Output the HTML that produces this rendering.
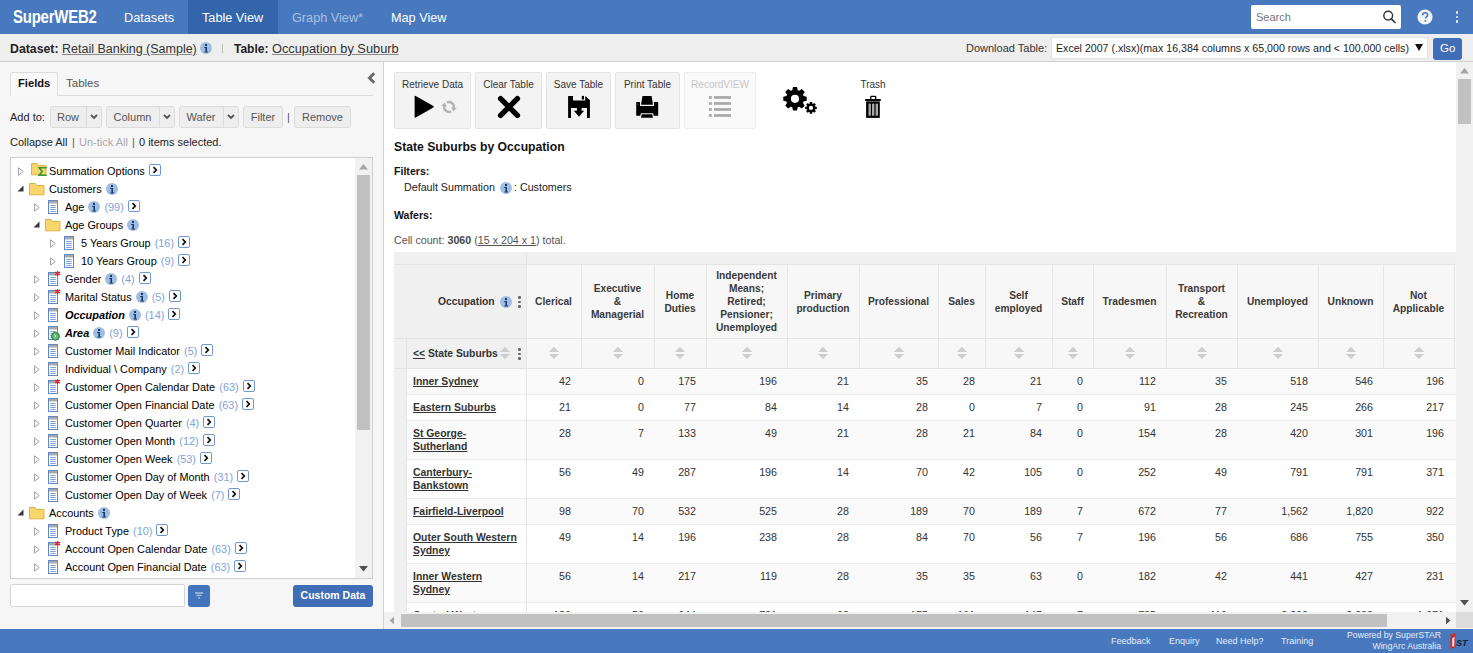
<!DOCTYPE html><html><head><meta charset="utf-8"><style>
*{box-sizing:border-box}
body{margin:0;width:1473px;height:653px;overflow:hidden;position:relative;font-family:'Liberation Sans',sans-serif;color:#222;background:#fff}
.abs{position:absolute}
.t{position:absolute;white-space:nowrap;line-height:1}
u{text-decoration:underline}
</style></head><body>
<div class="abs" style="left:0;top:0;width:1473px;height:34px;background:#4879be"></div>
<div class="abs" style="left:188px;top:0;width:90px;height:34px;background:#3465aa"></div>
<div class="t" style="left:13px;top:8px;font-size:18.5px;font-weight:bold;color:#fff;transform:scaleX(0.81);transform-origin:0 0;letter-spacing:-0.3px">SuperWEB2</div>
<div class="t" style="left:124px;top:12px;font-size:12.7px;color:#fff">Datasets</div>
<div class="t" style="left:202px;top:12px;font-size:12.7px;color:#fff">Table View</div>
<div class="t" style="left:292px;top:12px;font-size:12.7px;color:#a9c1e3">Graph View*</div>
<div class="t" style="left:391px;top:12px;font-size:12.7px;color:#fff">Map View</div>
<div class="abs" style="left:1251px;top:5px;width:150px;height:24px;background:#fff;border-radius:2px"></div>
<div class="t" style="left:1256px;top:12px;font-size:11px;color:#777">Search</div>
<svg class="abs" style="left:1382px;top:10px" width="15" height="14" viewBox="0 0 15 14"><circle cx="6.2" cy="5.6" r="4.4" fill="none" stroke="#333" stroke-width="1.4"/><path d="M9.4 8.9l3.6 3.6" stroke="#333" stroke-width="1.7" stroke-linecap="round"/></svg>
<svg class="abs" style="left:1417px;top:9px" width="16" height="16" viewBox="0 0 16 16"><circle cx="8" cy="8" r="7.6" fill="#eef2f9"/><path d="M5.6 6.2c0-1.5 1.1-2.4 2.5-2.4s2.5.9 2.5 2.2c0 1.9-2.1 1.9-2.1 3.6" fill="none" stroke="#4879be" stroke-width="1.6"/><circle cx="8.4" cy="11.9" r="0.95" fill="#4879be"/></svg>
<div class="abs" style="left:1455.5px;top:10.9px;width:2.8px;height:2.8px;border-radius:50%;background:#eef2f9"></div>
<div class="abs" style="left:1455.5px;top:15.6px;width:2.8px;height:2.8px;border-radius:50%;background:#eef2f9"></div>
<div class="abs" style="left:1455.5px;top:20.3px;width:2.8px;height:2.8px;border-radius:50%;background:#eef2f9"></div>
<div class="abs" style="left:0;top:34px;width:1473px;height:28px;background:#eeeeee;border-bottom:1px solid #cfcfcf"></div>
<div class="t" style="left:10px;top:43px;font-size:12.3px;font-weight:bold;color:#222">Dataset:</div>
<div class="t" style="left:62px;top:43px;font-size:12.5px;color:#333;text-decoration:underline;text-decoration-color:#888">Retail Banking (Sample)</div>
<svg style="position:absolute;left:200px;top:42px" width="12" height="12" viewBox="0 0 12 12"><circle cx="6" cy="6" r="6" fill="#9fbde2"/><rect x="5" y="2" width="2" height="2" fill="#1c3a66"/><path d="M4.2 5h2.8v4.6h1v0.9h-3.6v-0.9h1v-3.7h-1.2z" fill="#1c3a66"/></svg>
<div class="abs" style="left:222px;top:44px;width:1px;height:9px;background:#bbb"></div>
<div class="t" style="left:234px;top:43px;font-size:12px;font-weight:bold;color:#222">Table:</div>
<div class="t" style="left:272px;top:43px;font-size:12.8px;color:#333;text-decoration:underline;text-decoration-color:#888">Occupation by Suburb</div>
<div class="t" style="left:966px;top:43px;font-size:11px;color:#333">Download Table:</div>
<div class="abs" style="left:1051px;top:37px;width:377px;height:22px;background:#fff;border:1px solid #e2e2e2"></div>
<div class="t" style="left:1056px;top:43px;font-size:10.62px;color:#222">Excel 2007 (.xlsx)(max 16,384 columns x 65,000 rows and &lt; 100,000 cells)</div>
<svg class="abs" style="left:1415px;top:44px" width="8" height="7" viewBox="0 0 8 7"><path d="M0 0h8l-4 7z" fill="#111"/></svg>
<div class="abs" style="left:1433px;top:38px;width:29px;height:22px;background:#3f6eb6;border-radius:3px"></div>
<div class="t" style="left:1440px;top:43px;font-size:11.5px;color:#fff">Go</div>
<div class="abs" style="left:0;top:62px;width:384px;height:567px;background:#f6f6f6;border-right:1px solid #d3d3d3"></div>
<div class="abs" style="left:10px;top:72px;width:48px;height:24px;background:#f9f9f9;border:1px solid #dcdcdc;border-bottom:none;border-radius:3px 3px 0 0"></div>
<div class="abs" style="left:58px;top:95px;width:315px;height:1px;background:#dcdcdc"></div>
<div class="t" style="left:18px;top:78px;font-size:11.2px;font-weight:bold;color:#111">Fields</div>
<div class="t" style="left:66px;top:78px;font-size:11.5px;color:#555">Tables</div>
<svg class="abs" style="left:367px;top:72px" width="9" height="12" viewBox="0 0 9 12"><path d="M7.2 1.2L2.4 6 7.2 10.8" fill="none" stroke="#666" stroke-width="2.8"/></svg>
<div class="t" style="left:10px;top:112px;font-size:11px;color:#222">Add to:</div>
<div class="abs" style="left:50px;top:106px;width:52px;height:22px;background:#eeeeee;border:1px solid #dcdcdc;border-radius:3px"></div>
<div class="t" style="left:50px;top:112px;width:36px;text-align:center;font-size:11px;color:#555">Row</div>
<div class="abs" style="left:86px;top:107px;width:1px;height:20px;background:#dcdcdc"></div>
<svg class="abs" style="left:90.0px;top:114px" width="8" height="6" viewBox="0 0 8 6"><path d="M1 1l3 3 3-3" fill="none" stroke="#555" stroke-width="1.8"/></svg>
<div class="abs" style="left:106px;top:106px;width:69px;height:22px;background:#eeeeee;border:1px solid #dcdcdc;border-radius:3px"></div>
<div class="t" style="left:106px;top:112px;width:53px;text-align:center;font-size:11px;color:#555">Column</div>
<div class="abs" style="left:159px;top:107px;width:1px;height:20px;background:#dcdcdc"></div>
<svg class="abs" style="left:163.0px;top:114px" width="8" height="6" viewBox="0 0 8 6"><path d="M1 1l3 3 3-3" fill="none" stroke="#555" stroke-width="1.8"/></svg>
<div class="abs" style="left:179px;top:106px;width:60px;height:22px;background:#eeeeee;border:1px solid #dcdcdc;border-radius:3px"></div>
<div class="t" style="left:179px;top:112px;width:44px;text-align:center;font-size:11px;color:#555">Wafer</div>
<div class="abs" style="left:223px;top:107px;width:1px;height:20px;background:#dcdcdc"></div>
<svg class="abs" style="left:227.0px;top:114px" width="8" height="6" viewBox="0 0 8 6"><path d="M1 1l3 3 3-3" fill="none" stroke="#555" stroke-width="1.8"/></svg>
<div class="abs" style="left:243px;top:106px;width:40px;height:22px;background:#eeeeee;border:1px solid #dcdcdc;border-radius:3px"></div>
<div class="t" style="left:243px;top:112px;width:40px;text-align:center;font-size:11px;color:#555">Filter</div>
<div class="t" style="left:287px;top:112px;font-size:11px;color:#555">|</div>
<div class="abs" style="left:294px;top:106px;width:57px;height:22px;background:#eeeeee;border:1px solid #dcdcdc;border-radius:3px"></div>
<div class="t" style="left:294px;top:112px;width:57px;text-align:center;font-size:11px;color:#555">Remove</div>
<div class="t" style="left:10px;top:137px;font-size:11px;color:#222">Collapse All</div>
<div class="t" style="left:72px;top:137px;font-size:11px;color:#555">|</div>
<div class="t" style="left:79px;top:137px;font-size:11px;color:#aaa">Un-tick All</div>
<div class="t" style="left:132px;top:137px;font-size:11px;color:#555">|</div>
<div class="t" style="left:139px;top:137px;font-size:11px;color:#222">0 items selected.</div>
<div class="abs" style="left:10px;top:157px;width:363px;height:422px;background:#fff;border:1px solid #cfcfcf"></div>
<div class="abs" style="left:355px;top:158px;width:17px;height:420px;background:#f1f1f1"></div>
<div class="abs" style="left:357px;top:175px;width:13px;height:255px;background:#c1c1c1"></div>
<svg class="abs" style="left:359px;top:164px" width="9" height="6" viewBox="0 0 9 6"><path d="M0 5.5L4.5 0 9 5.5z" fill="#a3a3a3"/></svg>
<svg class="abs" style="left:359px;top:566px" width="9" height="6" viewBox="0 0 9 6"><path d="M0 0L4.5 5.5 9 0z" fill="#505050"/></svg>
<div class="abs" style="left:11px;top:158px;width:344px;height:420px;overflow:hidden">
<svg class="abs" style="left:7px;top:9px" width="6" height="9" viewBox="0 0 6 9"><path d="M0.6 0.8L5.2 4.5 0.6 8.2z" fill="#fff" stroke="#a0a0a0" stroke-width="1"/></svg>
<svg class="abs" style="left:20px;top:5px" width="16" height="13" viewBox="0 0 16 13"><path d="M0.5 11.8V0.5h5.8l1.5 2h7.2v9.3z" fill="#f9d56e" stroke="#dcb24a" stroke-width="1"/></svg>
<svg class="abs" style="left:27px;top:9px" width="9" height="9" viewBox="0 0 9 9"><path d="M8 1.5V0.8H1l3.2 3.7L1 8.2h7v-0.8" fill="none" stroke="#2f9a2f" stroke-width="1.6"/></svg>
<div class="t" style="left:38px;top:8px;font-size:10.9px;color:#000;">Summation Options</div>
<svg class="abs" style="left:138px;top:6px" width="12" height="12" viewBox="0 0 12 12"><rect x="0.5" y="0.5" width="11" height="11" rx="1.5" fill="#fff" stroke="#6c98d4"/><path d="M4.5 3.2L7.3 6 4.5 8.8" fill="none" stroke="#111" stroke-width="1.7"/></svg>
<svg class="abs" style="left:6px;top:27px" width="7" height="7" viewBox="0 0 7 7"><path d="M6.5 0.5V6.5H0.5z" fill="#3a3a3a"/></svg>
<svg class="abs" style="left:18px;top:25px" width="16" height="13" viewBox="0 0 16 13"><path d="M0.5 11.8V0.5h5.8l1.5 2h7.2v9.3z" fill="#f9d56e" stroke="#dcb24a" stroke-width="1"/></svg>
<div class="t" style="left:38px;top:26px;font-size:10.9px;color:#000;">Customers</div>
<svg style="position:absolute;left:95px;top:25px" width="12" height="12" viewBox="0 0 12 12"><circle cx="6" cy="6" r="6" fill="#9fbde2"/><rect x="5" y="2" width="2" height="2" fill="#1c3a66"/><path d="M4.2 5h2.8v4.6h1v0.9h-3.6v-0.9h1v-3.7h-1.2z" fill="#1c3a66"/></svg>
<svg class="abs" style="left:23px;top:45px" width="6" height="9" viewBox="0 0 6 9"><path d="M0.6 0.8L5.2 4.5 0.6 8.2z" fill="#fff" stroke="#a0a0a0" stroke-width="1"/></svg>
<svg class="abs" style="left:37px;top:42px;overflow:visible" width="12" height="15" viewBox="0 0 12 15"><rect x="0.5" y="0.5" width="9" height="13" fill="#fff" stroke="#5b87c6"/><rect x="1" y="1" width="8" height="2.5" fill="#a9a9a9"/><path d="M2.2 5.5h5.6M2.2 7.5h5.6M2.2 9.5h5.6M2.2 11.5h5.6" stroke="#7ea3d6" stroke-width="1"/></svg>
<div class="t" style="left:54px;top:44px;font-size:10.9px;color:#000;">Age</div>
<svg style="position:absolute;left:77px;top:43px" width="12" height="12" viewBox="0 0 12 12"><circle cx="6" cy="6" r="6" fill="#9fbde2"/><rect x="5" y="2" width="2" height="2" fill="#1c3a66"/><path d="M4.2 5h2.8v4.6h1v0.9h-3.6v-0.9h1v-3.7h-1.2z" fill="#1c3a66"/></svg>
<div class="t" style="left:93.39518749999999px;top:44px;font-size:10.9px;color:#7fa2d6">(99)</div>
<svg class="abs" style="left:117px;top:42px" width="12" height="12" viewBox="0 0 12 12"><rect x="0.5" y="0.5" width="11" height="11" rx="1.5" fill="#fff" stroke="#6c98d4"/><path d="M4.5 3.2L7.3 6 4.5 8.8" fill="none" stroke="#111" stroke-width="1.7"/></svg>
<svg class="abs" style="left:22px;top:63px" width="7" height="7" viewBox="0 0 7 7"><path d="M6.5 0.5V6.5H0.5z" fill="#3a3a3a"/></svg>
<svg class="abs" style="left:34px;top:61px" width="16" height="13" viewBox="0 0 16 13"><path d="M0.5 11.8V0.5h5.8l1.5 2h7.2v9.3z" fill="#f9d56e" stroke="#dcb24a" stroke-width="1"/></svg>
<div class="t" style="left:54px;top:62px;font-size:10.9px;color:#000;">Age Groups</div>
<svg style="position:absolute;left:116px;top:61px" width="12" height="12" viewBox="0 0 12 12"><circle cx="6" cy="6" r="6" fill="#9fbde2"/><rect x="5" y="2" width="2" height="2" fill="#1c3a66"/><path d="M4.2 5h2.8v4.6h1v0.9h-3.6v-0.9h1v-3.7h-1.2z" fill="#1c3a66"/></svg>
<svg class="abs" style="left:39px;top:81px" width="6" height="9" viewBox="0 0 6 9"><path d="M0.6 0.8L5.2 4.5 0.6 8.2z" fill="#fff" stroke="#a0a0a0" stroke-width="1"/></svg>
<svg class="abs" style="left:53px;top:78px;overflow:visible" width="12" height="15" viewBox="0 0 12 15"><rect x="0.5" y="0.5" width="9" height="13" fill="#fff" stroke="#5b87c6"/><rect x="1" y="1" width="8" height="2.5" fill="#a9a9a9"/><path d="M2.2 5.5h5.6M2.2 7.5h5.6M2.2 9.5h5.6M2.2 11.5h5.6" stroke="#7ea3d6" stroke-width="1"/></svg>
<div class="t" style="left:70px;top:80px;font-size:10.9px;color:#000;">5 Years Group</div>
<div class="t" style="left:143.69187499999998px;top:80px;font-size:10.9px;color:#7fa2d6">(16)</div>
<svg class="abs" style="left:167px;top:78px" width="12" height="12" viewBox="0 0 12 12"><rect x="0.5" y="0.5" width="11" height="11" rx="1.5" fill="#fff" stroke="#6c98d4"/><path d="M4.5 3.2L7.3 6 4.5 8.8" fill="none" stroke="#111" stroke-width="1.7"/></svg>
<svg class="abs" style="left:39px;top:99px" width="6" height="9" viewBox="0 0 6 9"><path d="M0.6 0.8L5.2 4.5 0.6 8.2z" fill="#fff" stroke="#a0a0a0" stroke-width="1"/></svg>
<svg class="abs" style="left:53px;top:96px;overflow:visible" width="12" height="15" viewBox="0 0 12 15"><rect x="0.5" y="0.5" width="9" height="13" fill="#fff" stroke="#5b87c6"/><rect x="1" y="1" width="8" height="2.5" fill="#a9a9a9"/><path d="M2.2 5.5h5.6M2.2 7.5h5.6M2.2 9.5h5.6M2.2 11.5h5.6" stroke="#7ea3d6" stroke-width="1"/></svg>
<div class="t" style="left:70px;top:98px;font-size:10.9px;color:#000;">10 Years Group</div>
<div class="t" style="left:149.7541484375px;top:98px;font-size:10.9px;color:#7fa2d6">(9)</div>
<svg class="abs" style="left:167px;top:96px" width="12" height="12" viewBox="0 0 12 12"><rect x="0.5" y="0.5" width="11" height="11" rx="1.5" fill="#fff" stroke="#6c98d4"/><path d="M4.5 3.2L7.3 6 4.5 8.8" fill="none" stroke="#111" stroke-width="1.7"/></svg>
<svg class="abs" style="left:23px;top:117px" width="6" height="9" viewBox="0 0 6 9"><path d="M0.6 0.8L5.2 4.5 0.6 8.2z" fill="#fff" stroke="#a0a0a0" stroke-width="1"/></svg>
<svg class="abs" style="left:37px;top:114px;overflow:visible" width="12" height="15" viewBox="0 0 12 15"><rect x="0.5" y="0.5" width="9" height="13" fill="#fff" stroke="#5b87c6"/><rect x="1" y="1" width="8" height="2.5" fill="#a9a9a9"/><path d="M2.2 5.5h5.6M2.2 7.5h5.6M2.2 9.5h5.6M2.2 11.5h5.6" stroke="#7ea3d6" stroke-width="1"/><path d="M9.6 -1v5M7.1 0.2l5 2.6M7.1 2.8l5-2.6" stroke="#e8202a" stroke-width="1.3"/></svg>
<div class="t" style="left:54px;top:116px;font-size:10.9px;color:#000;">Gender</div>
<svg style="position:absolute;left:94px;top:115px" width="12" height="12" viewBox="0 0 12 12"><circle cx="6" cy="6" r="6" fill="#9fbde2"/><rect x="5" y="2" width="2" height="2" fill="#1c3a66"/><path d="M4.2 5h2.8v4.6h1v0.9h-3.6v-0.9h1v-3.7h-1.2z" fill="#1c3a66"/></svg>
<div class="t" style="left:110.35746093750001px;top:116px;font-size:10.9px;color:#7fa2d6">(4)</div>
<svg class="abs" style="left:128px;top:114px" width="12" height="12" viewBox="0 0 12 12"><rect x="0.5" y="0.5" width="11" height="11" rx="1.5" fill="#fff" stroke="#6c98d4"/><path d="M4.5 3.2L7.3 6 4.5 8.8" fill="none" stroke="#111" stroke-width="1.7"/></svg>
<svg class="abs" style="left:23px;top:135px" width="6" height="9" viewBox="0 0 6 9"><path d="M0.6 0.8L5.2 4.5 0.6 8.2z" fill="#fff" stroke="#a0a0a0" stroke-width="1"/></svg>
<svg class="abs" style="left:37px;top:132px;overflow:visible" width="12" height="15" viewBox="0 0 12 15"><rect x="0.5" y="0.5" width="9" height="13" fill="#fff" stroke="#5b87c6"/><rect x="1" y="1" width="8" height="2.5" fill="#a9a9a9"/><path d="M2.2 5.5h5.6M2.2 7.5h5.6M2.2 9.5h5.6M2.2 11.5h5.6" stroke="#7ea3d6" stroke-width="1"/><path d="M9.6 -1v5M7.1 0.2l5 2.6M7.1 2.8l5-2.6" stroke="#e8202a" stroke-width="1.3"/></svg>
<div class="t" style="left:54px;top:134px;font-size:10.9px;color:#000;">Marital Status</div>
<svg style="position:absolute;left:125px;top:133px" width="12" height="12" viewBox="0 0 12 12"><circle cx="6" cy="6" r="6" fill="#9fbde2"/><rect x="5" y="2" width="2" height="2" fill="#1c3a66"/><path d="M4.2 5h2.8v4.6h1v0.9h-3.6v-0.9h1v-3.7h-1.2z" fill="#1c3a66"/></svg>
<div class="t" style="left:140.63646875px;top:134px;font-size:10.9px;color:#7fa2d6">(5)</div>
<svg class="abs" style="left:158px;top:132px" width="12" height="12" viewBox="0 0 12 12"><rect x="0.5" y="0.5" width="11" height="11" rx="1.5" fill="#fff" stroke="#6c98d4"/><path d="M4.5 3.2L7.3 6 4.5 8.8" fill="none" stroke="#111" stroke-width="1.7"/></svg>
<svg class="abs" style="left:23px;top:153px" width="6" height="9" viewBox="0 0 6 9"><path d="M0.6 0.8L5.2 4.5 0.6 8.2z" fill="#fff" stroke="#a0a0a0" stroke-width="1"/></svg>
<svg class="abs" style="left:37px;top:150px;overflow:visible" width="12" height="15" viewBox="0 0 12 15"><rect x="0.5" y="0.5" width="9" height="13" fill="#fff" stroke="#5b87c6"/><rect x="1" y="1" width="8" height="2.5" fill="#a9a9a9"/><path d="M2.2 5.5h5.6M2.2 7.5h5.6M2.2 9.5h5.6M2.2 11.5h5.6" stroke="#7ea3d6" stroke-width="1"/></svg>
<div class="t" style="left:54px;top:152px;font-size:10.9px;color:#000;font-weight:bold;font-style:italic;">Occupation</div>
<svg style="position:absolute;left:118px;top:151px" width="12" height="12" viewBox="0 0 12 12"><circle cx="6" cy="6" r="6" fill="#9fbde2"/><rect x="5" y="2" width="2" height="2" fill="#1c3a66"/><path d="M4.2 5h2.8v4.6h1v0.9h-3.6v-0.9h1v-3.7h-1.2z" fill="#1c3a66"/></svg>
<div class="t" style="left:133.9568125px;top:152px;font-size:10.9px;color:#7fa2d6">(14)</div>
<svg class="abs" style="left:157px;top:150px" width="12" height="12" viewBox="0 0 12 12"><rect x="0.5" y="0.5" width="11" height="11" rx="1.5" fill="#fff" stroke="#6c98d4"/><path d="M4.5 3.2L7.3 6 4.5 8.8" fill="none" stroke="#111" stroke-width="1.7"/></svg>
<svg class="abs" style="left:23px;top:171px" width="6" height="9" viewBox="0 0 6 9"><path d="M0.6 0.8L5.2 4.5 0.6 8.2z" fill="#fff" stroke="#a0a0a0" stroke-width="1"/></svg>
<svg class="abs" style="left:37px;top:168px;overflow:visible" width="12" height="15" viewBox="0 0 12 15"><rect x="0.5" y="0.5" width="9" height="13" fill="#fff" stroke="#5b87c6"/><rect x="1" y="1" width="8" height="2.5" fill="#a9a9a9"/><path d="M2.2 5.5h5.6M2.2 7.5h5.6M2.2 9.5h5.6M2.2 11.5h5.6" stroke="#7ea3d6" stroke-width="1"/><circle cx="7.5" cy="10.3" r="3.9" fill="#5cb870" stroke="#1f7a33" stroke-width="1"/><path d="M6 8.6c1.2 0.2 1.8 1 1.6 2.2l-1.2 1" fill="none" stroke="#e8f6ea" stroke-width="1"/></svg>
<div class="t" style="left:54px;top:170px;font-size:10.9px;color:#000;font-weight:bold;font-style:italic;">Area</div>
<svg style="position:absolute;left:82px;top:169px" width="12" height="12" viewBox="0 0 12 12"><circle cx="6" cy="6" r="6" fill="#9fbde2"/><rect x="5" y="2" width="2" height="2" fill="#1c3a66"/><path d="M4.2 5h2.8v4.6h1v0.9h-3.6v-0.9h1v-3.7h-1.2z" fill="#1c3a66"/></svg>
<div class="t" style="left:98.2380234375px;top:170px;font-size:10.9px;color:#7fa2d6">(9)</div>
<svg class="abs" style="left:116px;top:168px" width="12" height="12" viewBox="0 0 12 12"><rect x="0.5" y="0.5" width="11" height="11" rx="1.5" fill="#fff" stroke="#6c98d4"/><path d="M4.5 3.2L7.3 6 4.5 8.8" fill="none" stroke="#111" stroke-width="1.7"/></svg>
<svg class="abs" style="left:23px;top:189px" width="6" height="9" viewBox="0 0 6 9"><path d="M0.6 0.8L5.2 4.5 0.6 8.2z" fill="#fff" stroke="#a0a0a0" stroke-width="1"/></svg>
<svg class="abs" style="left:37px;top:186px;overflow:visible" width="12" height="15" viewBox="0 0 12 15"><rect x="0.5" y="0.5" width="9" height="13" fill="#fff" stroke="#5b87c6"/><rect x="1" y="1" width="8" height="2.5" fill="#a9a9a9"/><path d="M2.2 5.5h5.6M2.2 7.5h5.6M2.2 9.5h5.6M2.2 11.5h5.6" stroke="#7ea3d6" stroke-width="1"/></svg>
<div class="t" style="left:54px;top:188px;font-size:10.9px;color:#000;">Customer Mail Indicator</div>
<div class="t" style="left:173.09718750000002px;top:188px;font-size:10.9px;color:#7fa2d6">(5)</div>
<svg class="abs" style="left:190px;top:186px" width="12" height="12" viewBox="0 0 12 12"><rect x="0.5" y="0.5" width="11" height="11" rx="1.5" fill="#fff" stroke="#6c98d4"/><path d="M4.5 3.2L7.3 6 4.5 8.8" fill="none" stroke="#111" stroke-width="1.7"/></svg>
<svg class="abs" style="left:23px;top:207px" width="6" height="9" viewBox="0 0 6 9"><path d="M0.6 0.8L5.2 4.5 0.6 8.2z" fill="#fff" stroke="#a0a0a0" stroke-width="1"/></svg>
<svg class="abs" style="left:37px;top:204px;overflow:visible" width="12" height="15" viewBox="0 0 12 15"><rect x="0.5" y="0.5" width="9" height="13" fill="#fff" stroke="#5b87c6"/><rect x="1" y="1" width="8" height="2.5" fill="#a9a9a9"/><path d="M2.2 5.5h5.6M2.2 7.5h5.6M2.2 9.5h5.6M2.2 11.5h5.6" stroke="#7ea3d6" stroke-width="1"/></svg>
<div class="t" style="left:54px;top:206px;font-size:10.9px;color:#000;">Individual \ Company</div>
<div class="t" style="left:159.790671875px;top:206px;font-size:10.9px;color:#7fa2d6">(2)</div>
<svg class="abs" style="left:177px;top:204px" width="12" height="12" viewBox="0 0 12 12"><rect x="0.5" y="0.5" width="11" height="11" rx="1.5" fill="#fff" stroke="#6c98d4"/><path d="M4.5 3.2L7.3 6 4.5 8.8" fill="none" stroke="#111" stroke-width="1.7"/></svg>
<svg class="abs" style="left:23px;top:225px" width="6" height="9" viewBox="0 0 6 9"><path d="M0.6 0.8L5.2 4.5 0.6 8.2z" fill="#fff" stroke="#a0a0a0" stroke-width="1"/></svg>
<svg class="abs" style="left:37px;top:222px;overflow:visible" width="12" height="15" viewBox="0 0 12 15"><rect x="0.5" y="0.5" width="9" height="13" fill="#fff" stroke="#5b87c6"/><rect x="1" y="1" width="8" height="2.5" fill="#a9a9a9"/><path d="M2.2 5.5h5.6M2.2 7.5h5.6M2.2 9.5h5.6M2.2 11.5h5.6" stroke="#7ea3d6" stroke-width="1"/><path d="M9.6 -1v5M7.1 0.2l5 2.6M7.1 2.8l5-2.6" stroke="#e8202a" stroke-width="1.3"/></svg>
<div class="t" style="left:54px;top:224px;font-size:10.9px;color:#000;">Customer Open Calendar Date</div>
<div class="t" style="left:208.2565px;top:224px;font-size:10.9px;color:#7fa2d6">(63)</div>
<svg class="abs" style="left:232px;top:222px" width="12" height="12" viewBox="0 0 12 12"><rect x="0.5" y="0.5" width="11" height="11" rx="1.5" fill="#fff" stroke="#6c98d4"/><path d="M4.5 3.2L7.3 6 4.5 8.8" fill="none" stroke="#111" stroke-width="1.7"/></svg>
<svg class="abs" style="left:23px;top:243px" width="6" height="9" viewBox="0 0 6 9"><path d="M0.6 0.8L5.2 4.5 0.6 8.2z" fill="#fff" stroke="#a0a0a0" stroke-width="1"/></svg>
<svg class="abs" style="left:37px;top:240px;overflow:visible" width="12" height="15" viewBox="0 0 12 15"><rect x="0.5" y="0.5" width="9" height="13" fill="#fff" stroke="#5b87c6"/><rect x="1" y="1" width="8" height="2.5" fill="#a9a9a9"/><path d="M2.2 5.5h5.6M2.2 7.5h5.6M2.2 9.5h5.6M2.2 11.5h5.6" stroke="#7ea3d6" stroke-width="1"/></svg>
<div class="t" style="left:54px;top:242px;font-size:10.9px;color:#000;">Customer Open Financial Date</div>
<div class="t" style="left:207.6442265625px;top:242px;font-size:10.9px;color:#7fa2d6">(63)</div>
<svg class="abs" style="left:231px;top:240px" width="12" height="12" viewBox="0 0 12 12"><rect x="0.5" y="0.5" width="11" height="11" rx="1.5" fill="#fff" stroke="#6c98d4"/><path d="M4.5 3.2L7.3 6 4.5 8.8" fill="none" stroke="#111" stroke-width="1.7"/></svg>
<svg class="abs" style="left:23px;top:261px" width="6" height="9" viewBox="0 0 6 9"><path d="M0.6 0.8L5.2 4.5 0.6 8.2z" fill="#fff" stroke="#a0a0a0" stroke-width="1"/></svg>
<svg class="abs" style="left:37px;top:258px;overflow:visible" width="12" height="15" viewBox="0 0 12 15"><rect x="0.5" y="0.5" width="9" height="13" fill="#fff" stroke="#5b87c6"/><rect x="1" y="1" width="8" height="2.5" fill="#a9a9a9"/><path d="M2.2 5.5h5.6M2.2 7.5h5.6M2.2 9.5h5.6M2.2 11.5h5.6" stroke="#7ea3d6" stroke-width="1"/></svg>
<div class="t" style="left:54px;top:260px;font-size:10.9px;color:#000;">Customer Open Quarter</div>
<div class="t" style="left:174.92208593750001px;top:260px;font-size:10.9px;color:#7fa2d6">(4)</div>
<svg class="abs" style="left:192px;top:258px" width="12" height="12" viewBox="0 0 12 12"><rect x="0.5" y="0.5" width="11" height="11" rx="1.5" fill="#fff" stroke="#6c98d4"/><path d="M4.5 3.2L7.3 6 4.5 8.8" fill="none" stroke="#111" stroke-width="1.7"/></svg>
<svg class="abs" style="left:23px;top:279px" width="6" height="9" viewBox="0 0 6 9"><path d="M0.6 0.8L5.2 4.5 0.6 8.2z" fill="#fff" stroke="#a0a0a0" stroke-width="1"/></svg>
<svg class="abs" style="left:37px;top:276px;overflow:visible" width="12" height="15" viewBox="0 0 12 15"><rect x="0.5" y="0.5" width="9" height="13" fill="#fff" stroke="#5b87c6"/><rect x="1" y="1" width="8" height="2.5" fill="#a9a9a9"/><path d="M2.2 5.5h5.6M2.2 7.5h5.6M2.2 9.5h5.6M2.2 11.5h5.6" stroke="#7ea3d6" stroke-width="1"/></svg>
<div class="t" style="left:54px;top:278px;font-size:10.9px;color:#000;">Customer Open Month</div>
<div class="t" style="left:168.26371875px;top:278px;font-size:10.9px;color:#7fa2d6">(12)</div>
<svg class="abs" style="left:192px;top:276px" width="12" height="12" viewBox="0 0 12 12"><rect x="0.5" y="0.5" width="11" height="11" rx="1.5" fill="#fff" stroke="#6c98d4"/><path d="M4.5 3.2L7.3 6 4.5 8.8" fill="none" stroke="#111" stroke-width="1.7"/></svg>
<svg class="abs" style="left:23px;top:297px" width="6" height="9" viewBox="0 0 6 9"><path d="M0.6 0.8L5.2 4.5 0.6 8.2z" fill="#fff" stroke="#a0a0a0" stroke-width="1"/></svg>
<svg class="abs" style="left:37px;top:294px;overflow:visible" width="12" height="15" viewBox="0 0 12 15"><rect x="0.5" y="0.5" width="9" height="13" fill="#fff" stroke="#5b87c6"/><rect x="1" y="1" width="8" height="2.5" fill="#a9a9a9"/><path d="M2.2 5.5h5.6M2.2 7.5h5.6M2.2 9.5h5.6M2.2 11.5h5.6" stroke="#7ea3d6" stroke-width="1"/></svg>
<div class="t" style="left:54px;top:296px;font-size:10.9px;color:#000;">Customer Open Week</div>
<div class="t" style="left:165.63409375px;top:296px;font-size:10.9px;color:#7fa2d6">(53)</div>
<svg class="abs" style="left:189px;top:294px" width="12" height="12" viewBox="0 0 12 12"><rect x="0.5" y="0.5" width="11" height="11" rx="1.5" fill="#fff" stroke="#6c98d4"/><path d="M4.5 3.2L7.3 6 4.5 8.8" fill="none" stroke="#111" stroke-width="1.7"/></svg>
<svg class="abs" style="left:23px;top:315px" width="6" height="9" viewBox="0 0 6 9"><path d="M0.6 0.8L5.2 4.5 0.6 8.2z" fill="#fff" stroke="#a0a0a0" stroke-width="1"/></svg>
<svg class="abs" style="left:37px;top:312px;overflow:visible" width="12" height="15" viewBox="0 0 12 15"><rect x="0.5" y="0.5" width="9" height="13" fill="#fff" stroke="#5b87c6"/><rect x="1" y="1" width="8" height="2.5" fill="#a9a9a9"/><path d="M2.2 5.5h5.6M2.2 7.5h5.6M2.2 9.5h5.6M2.2 11.5h5.6" stroke="#7ea3d6" stroke-width="1"/></svg>
<div class="t" style="left:54px;top:314px;font-size:10.9px;color:#000;">Customer Open Day of Month</div>
<div class="t" style="left:202.79457812500002px;top:314px;font-size:10.9px;color:#7fa2d6">(31)</div>
<svg class="abs" style="left:226px;top:312px" width="12" height="12" viewBox="0 0 12 12"><rect x="0.5" y="0.5" width="11" height="11" rx="1.5" fill="#fff" stroke="#6c98d4"/><path d="M4.5 3.2L7.3 6 4.5 8.8" fill="none" stroke="#111" stroke-width="1.7"/></svg>
<svg class="abs" style="left:23px;top:333px" width="6" height="9" viewBox="0 0 6 9"><path d="M0.6 0.8L5.2 4.5 0.6 8.2z" fill="#fff" stroke="#a0a0a0" stroke-width="1"/></svg>
<svg class="abs" style="left:37px;top:330px;overflow:visible" width="12" height="15" viewBox="0 0 12 15"><rect x="0.5" y="0.5" width="9" height="13" fill="#fff" stroke="#5b87c6"/><rect x="1" y="1" width="8" height="2.5" fill="#a9a9a9"/><path d="M2.2 5.5h5.6M2.2 7.5h5.6M2.2 9.5h5.6M2.2 11.5h5.6" stroke="#7ea3d6" stroke-width="1"/></svg>
<div class="t" style="left:54px;top:332px;font-size:10.9px;color:#000;">Customer Open Day of Week</div>
<div class="t" style="left:200.164953125px;top:332px;font-size:10.9px;color:#7fa2d6">(7)</div>
<svg class="abs" style="left:217px;top:330px" width="12" height="12" viewBox="0 0 12 12"><rect x="0.5" y="0.5" width="11" height="11" rx="1.5" fill="#fff" stroke="#6c98d4"/><path d="M4.5 3.2L7.3 6 4.5 8.8" fill="none" stroke="#111" stroke-width="1.7"/></svg>
<svg class="abs" style="left:6px;top:351px" width="7" height="7" viewBox="0 0 7 7"><path d="M6.5 0.5V6.5H0.5z" fill="#3a3a3a"/></svg>
<svg class="abs" style="left:18px;top:349px" width="16" height="13" viewBox="0 0 16 13"><path d="M0.5 11.8V0.5h5.8l1.5 2h7.2v9.3z" fill="#f9d56e" stroke="#dcb24a" stroke-width="1"/></svg>
<div class="t" style="left:38px;top:350px;font-size:10.9px;color:#000;">Accounts</div>
<svg style="position:absolute;left:87px;top:349px" width="12" height="12" viewBox="0 0 12 12"><circle cx="6" cy="6" r="6" fill="#9fbde2"/><rect x="5" y="2" width="2" height="2" fill="#1c3a66"/><path d="M4.2 5h2.8v4.6h1v0.9h-3.6v-0.9h1v-3.7h-1.2z" fill="#1c3a66"/></svg>
<svg class="abs" style="left:23px;top:369px" width="6" height="9" viewBox="0 0 6 9"><path d="M0.6 0.8L5.2 4.5 0.6 8.2z" fill="#fff" stroke="#a0a0a0" stroke-width="1"/></svg>
<svg class="abs" style="left:37px;top:366px;overflow:visible" width="12" height="15" viewBox="0 0 12 15"><rect x="0.5" y="0.5" width="9" height="13" fill="#fff" stroke="#5b87c6"/><rect x="1" y="1" width="8" height="2.5" fill="#a9a9a9"/><path d="M2.2 5.5h5.6M2.2 7.5h5.6M2.2 9.5h5.6M2.2 11.5h5.6" stroke="#7ea3d6" stroke-width="1"/></svg>
<div class="t" style="left:54px;top:368px;font-size:10.9px;color:#000;">Product Type</div>
<div class="t" style="left:122.028984375px;top:368px;font-size:10.9px;color:#7fa2d6">(10)</div>
<svg class="abs" style="left:145px;top:366px" width="12" height="12" viewBox="0 0 12 12"><rect x="0.5" y="0.5" width="11" height="11" rx="1.5" fill="#fff" stroke="#6c98d4"/><path d="M4.5 3.2L7.3 6 4.5 8.8" fill="none" stroke="#111" stroke-width="1.7"/></svg>
<svg class="abs" style="left:23px;top:387px" width="6" height="9" viewBox="0 0 6 9"><path d="M0.6 0.8L5.2 4.5 0.6 8.2z" fill="#fff" stroke="#a0a0a0" stroke-width="1"/></svg>
<svg class="abs" style="left:37px;top:384px;overflow:visible" width="12" height="15" viewBox="0 0 12 15"><rect x="0.5" y="0.5" width="9" height="13" fill="#fff" stroke="#5b87c6"/><rect x="1" y="1" width="8" height="2.5" fill="#a9a9a9"/><path d="M2.2 5.5h5.6M2.2 7.5h5.6M2.2 9.5h5.6M2.2 11.5h5.6" stroke="#7ea3d6" stroke-width="1"/><path d="M9.6 -1v5M7.1 0.2l5 2.6M7.1 2.8l5-2.6" stroke="#e8202a" stroke-width="1.3"/></svg>
<div class="t" style="left:54px;top:386px;font-size:10.9px;color:#000;">Account Open Calendar Date</div>
<div class="t" style="left:200.394875px;top:386px;font-size:10.9px;color:#7fa2d6">(63)</div>
<svg class="abs" style="left:224px;top:384px" width="12" height="12" viewBox="0 0 12 12"><rect x="0.5" y="0.5" width="11" height="11" rx="1.5" fill="#fff" stroke="#6c98d4"/><path d="M4.5 3.2L7.3 6 4.5 8.8" fill="none" stroke="#111" stroke-width="1.7"/></svg>
<svg class="abs" style="left:23px;top:405px" width="6" height="9" viewBox="0 0 6 9"><path d="M0.6 0.8L5.2 4.5 0.6 8.2z" fill="#fff" stroke="#a0a0a0" stroke-width="1"/></svg>
<svg class="abs" style="left:37px;top:402px;overflow:visible" width="12" height="15" viewBox="0 0 12 15"><rect x="0.5" y="0.5" width="9" height="13" fill="#fff" stroke="#5b87c6"/><rect x="1" y="1" width="8" height="2.5" fill="#a9a9a9"/><path d="M2.2 5.5h5.6M2.2 7.5h5.6M2.2 9.5h5.6M2.2 11.5h5.6" stroke="#7ea3d6" stroke-width="1"/></svg>
<div class="t" style="left:54px;top:404px;font-size:10.9px;color:#000;">Account Open Financial Date</div>
<div class="t" style="left:199.7826015625px;top:404px;font-size:10.9px;color:#7fa2d6">(63)</div>
<svg class="abs" style="left:223px;top:402px" width="12" height="12" viewBox="0 0 12 12"><rect x="0.5" y="0.5" width="11" height="11" rx="1.5" fill="#fff" stroke="#6c98d4"/><path d="M4.5 3.2L7.3 6 4.5 8.8" fill="none" stroke="#111" stroke-width="1.7"/></svg>
</div>
<div class="abs" style="left:10px;top:584px;width:175px;height:23px;background:#fff;border:1px solid #d5d5d5;border-radius:2px"></div>
<div class="abs" style="left:188px;top:585px;width:22px;height:22px;background:#4275bd;border-radius:3px"></div>
<svg class="abs" style="left:194px;top:592px" width="10" height="8" viewBox="0 0 10 8"><path d="M1 1h8M2.5 3.4h5M4 5.8h2" stroke="#a9c1e4" stroke-width="1.3"/></svg>
<div class="abs" style="left:293px;top:585px;width:80px;height:22px;background:#3f6eb6;border-radius:3px"></div>
<div class="t" style="left:293px;top:590px;width:80px;text-align:center;font-size:10.5px;font-weight:bold;color:#fff">Custom Data</div>
<div class="abs" style="left:394px;top:72px;width:77px;height:57px;background:#f3f3f3;border:1px solid #e4e4e4;border-radius:2px"></div>
<div class="t" style="left:394px;top:80px;width:77px;text-align:center;font-size:10px;color:#333">Retrieve Data</div>
<div class="abs" style="left:475px;top:72px;width:67px;height:57px;background:#f3f3f3;border:1px solid #e4e4e4;border-radius:2px"></div>
<div class="t" style="left:475px;top:80px;width:67px;text-align:center;font-size:10px;color:#333">Clear Table</div>
<div class="abs" style="left:546px;top:72px;width:65px;height:57px;background:#f3f3f3;border:1px solid #e4e4e4;border-radius:2px"></div>
<div class="t" style="left:546px;top:80px;width:65px;text-align:center;font-size:10px;color:#333">Save Table</div>
<div class="abs" style="left:615px;top:72px;width:65px;height:57px;background:#f3f3f3;border:1px solid #e4e4e4;border-radius:2px"></div>
<div class="t" style="left:615px;top:80px;width:65px;text-align:center;font-size:10px;color:#333">Print Table</div>
<div class="abs" style="left:684px;top:72px;width:72px;height:57px;background:#fafafa;border:1px solid #ededed;border-radius:2px"></div>
<div class="t" style="left:684px;top:80px;width:72px;text-align:center;font-size:10px;color:#c6c6c6">RecordVIEW</div>
<div class="t" style="left:851px;top:80px;width:44px;text-align:center;font-size:10px;color:#333">Trash</div>
<svg class="abs" style="left:413px;top:95px" width="22" height="24" viewBox="0 0 22 24"><path d="M1.6 1.6Q1.6 0.4 2.7 1L20.4 11.1Q21.3 11.8 20.4 12.5L2.7 22.6Q1.6 23.2 1.6 22z" fill="#000"/></svg>
<svg class="abs" style="left:441px;top:99px" width="16" height="16" viewBox="0 0 16 16"><path d="M5.93 3.56A4.9 4.9 0 0 1 12.73 9.27" fill="none" stroke="#b3b3b3" stroke-width="2.3"/><path d="M10.07 12.44A4.9 4.9 0 0 1 3.27 6.73" fill="none" stroke="#b3b3b3" stroke-width="2.3"/><path d="M10.2 8.2L15.8 9.2 12.2 12.6z" fill="#b3b3b3"/><path d="M5.8 7.8L0.2 6.8 3.8 3.4z" fill="#b3b3b3"/></svg>
<svg class="abs" style="left:497px;top:95px" width="24" height="24" viewBox="0 0 24 24"><path d="M3.6 3.6L20.4 20.4M20.4 3.6L3.6 20.4" stroke="#000" stroke-width="5.4" stroke-linecap="round"/></svg>
<svg class="abs" style="left:566px;top:95px" width="26" height="24" viewBox="0 0 26 24"><path d="M2.1 1.3Q2.1 0.9 2.6 0.9H7V5.5H19.2V0.9L23.9 5V22.4Q23.9 22.9 23.4 22.9H21V13.1H5V22.9H2.6Q2.1 22.9 2.1 22.4z" fill="#000"/><rect x="15.8" y="0.9" width="2.2" height="3.6" fill="#000"/><rect x="10.9" y="12" width="4.7" height="4.5" fill="#000"/><path d="M7.9 15.8H18.1L13 21.8z" fill="#000"/></svg>
<svg class="abs" style="left:634px;top:95px" width="26" height="24" viewBox="0 0 26 24"><path d="M8.5 1.1H17.6L19 9.7H7z" fill="#000"/><path d="M2.2 7.4Q2.2 7 2.6 7H6V10.9H20V7H23.8Q24.2 7 24.2 7.4V20.3Q24.2 20.7 23.8 20.7H19.6L19.2 18.3H6.8L6.4 20.7H2.6Q2.2 20.7 2.2 20.3z" fill="#000"/><path d="M7.8 19.2H18.2L19 22.8H7z" fill="#000"/><rect x="3.2" y="8.6" width="1.2" height="1" fill="#555"/></svg>
<svg class="abs" style="left:708px;top:95px" width="24" height="24" viewBox="0 0 24 24"><g fill="#a9a9a9"><rect x="0.9" y="1.1" width="2.9" height="2.7"/><rect x="6" y="1.1" width="17" height="2.7"/><rect x="0.9" y="7.1" width="2.9" height="2.7"/><rect x="6" y="7.1" width="17" height="2.7"/><rect x="0.9" y="13.1" width="2.9" height="2.7"/><rect x="6" y="13.1" width="17" height="2.7"/><rect x="0.9" y="19.1" width="2.9" height="2.7"/><rect x="6" y="19.1" width="17" height="2.7"/></g></svg>
<svg class="abs" style="left:780px;top:84px" width="40" height="34" viewBox="0 0 40 34"><path d="M23.57 12.04 L26.73 12.81 L26.73 16.79 L23.57 17.56 L23.01 18.91 L24.70 21.69 L21.89 24.50 L19.11 22.81 L17.76 23.37 L16.99 26.53 L13.01 26.53 L12.24 23.37 L10.89 22.81 L8.11 24.50 L5.30 21.69 L6.99 18.91 L6.43 17.56 L3.27 16.79 L3.27 12.81 L6.43 12.04 L6.99 10.69 L5.30 7.91 L8.11 5.10 L10.89 6.79 L12.24 6.23 L13.01 3.07 L16.99 3.07 L17.76 6.23 L19.11 6.79 L21.89 5.10 L24.70 7.91 L23.01 10.69z M19.10 14.80A4.1 4.1 0 1 0 10.90 14.80A4.1 4.1 0 1 0 19.10 14.80z" fill="#000" fill-rule="evenodd"/><path d="M35.07 22.52 L36.80 22.81 L36.80 24.99 L35.07 25.28 L34.85 25.81 L35.87 27.23 L34.33 28.77 L32.91 27.75 L32.38 27.97 L32.09 29.70 L29.91 29.70 L29.62 27.97 L29.09 27.75 L27.67 28.77 L26.13 27.23 L27.15 25.81 L26.93 25.28 L25.20 24.99 L25.20 22.81 L26.93 22.52 L27.15 21.99 L26.13 20.57 L27.67 19.03 L29.09 20.05 L29.62 19.83 L29.91 18.10 L32.09 18.10 L32.38 19.83 L32.91 20.05 L34.33 19.03 L35.87 20.57 L34.85 21.99z M33.10 23.90A2.1 2.1 0 1 0 28.90 23.90A2.1 2.1 0 1 0 33.10 23.90z" fill="#000" fill-rule="evenodd"/></svg>
<svg class="abs" style="left:864px;top:95px" width="18" height="24" viewBox="0 0 18 24"><path d="M6.8 4V1.8Q6.8 1.3 7.3 1.3H11.2Q11.7 1.3 11.7 1.8V4" fill="none" stroke="#000" stroke-width="1.3"/><rect x="1.1" y="4" width="15.7" height="1.9" rx="0.5" fill="#000"/><rect x="2.1" y="5.9" width="13.7" height="1.2" fill="#555"/><rect x="2.1" y="7" width="13.7" height="15.9" fill="#000"/><g fill="#a8a8a8"><rect x="4.5" y="8.7" width="2.4" height="12"/><rect x="8" y="8.7" width="2.4" height="12"/><rect x="11.6" y="8.7" width="2.4" height="12"/></g></svg>
<div class="t" style="left:394px;top:141px;font-size:12.2px;font-weight:bold;color:#111">State Suburbs by Occupation</div>
<div class="t" style="left:394px;top:166px;font-size:10.6px;font-weight:bold;color:#111">Filters:</div>
<div class="t" style="left:404px;top:182px;font-size:10.7px;color:#222">Default Summation</div>
<svg style="position:absolute;left:500px;top:182px" width="12" height="12" viewBox="0 0 12 12"><circle cx="6" cy="6" r="6" fill="#9fbde2"/><rect x="5" y="2" width="2" height="2" fill="#1c3a66"/><path d="M4.2 5h2.8v4.6h1v0.9h-3.6v-0.9h1v-3.7h-1.2z" fill="#1c3a66"/></svg>
<div class="t" style="left:514px;top:182px;font-size:10.7px;color:#222">: Customers</div>
<div class="t" style="left:394px;top:210px;font-size:10.6px;font-weight:bold;color:#111">Wafers:</div>
<div class="t" style="left:394px;top:235px;font-size:10.7px;color:#555">Cell count: <b style="color:#444">3060</b> (<u>15 x 204 x 1</u>) total.</div>
<div class="abs" style="left:394px;top:252px;width:1062px;height:360px;overflow:hidden">
<div class="abs" style="left:0px;top:0px;width:1100px;height:13px;background:#f0f0f0;border-bottom:1px solid #e3e3e3"></div>
<div class="abs" style="left:132px;top:0px;width:1px;height:13px;background:#e3e3e3;"></div>
<div class="abs" style="left:0px;top:13px;width:132px;height:74px;background:#f0f0f0;border-bottom:1px solid #e3e3e3"></div>
<div class="abs" style="left:132px;top:13px;width:1000px;height:74px;background:#f7f7f7;border-bottom:1px solid #e3e3e3"></div>
<div class="abs" style="left:0px;top:87px;width:12px;height:30px;background:#f0f0f0;border-bottom:1px solid #e3e3e3"></div>
<div class="abs" style="left:12px;top:87px;width:120px;height:30px;background:#f0f0f0;border-bottom:1px solid #e3e3e3;border-left:1px solid #e3e3e3"></div>
<div class="abs" style="left:132px;top:87px;width:1000px;height:30px;background:#f7f7f7;border-bottom:1px solid #e3e3e3"></div>
<div class="abs" style="left:0px;top:117px;width:12px;height:300px;background:#f0f0f0;"></div>
<div class="abs" style="left:132px;top:13px;width:1px;height:104px;background:#e6e6e6;"></div>
<div class="abs" style="left:187px;top:13px;width:1px;height:104px;background:#e6e6e6;"></div>
<div class="abs" style="left:260px;top:13px;width:1px;height:104px;background:#e6e6e6;"></div>
<div class="abs" style="left:312px;top:13px;width:1px;height:104px;background:#e6e6e6;"></div>
<div class="abs" style="left:393px;top:13px;width:1px;height:104px;background:#e6e6e6;"></div>
<div class="abs" style="left:465px;top:13px;width:1px;height:104px;background:#e6e6e6;"></div>
<div class="abs" style="left:544px;top:13px;width:1px;height:104px;background:#e6e6e6;"></div>
<div class="abs" style="left:591px;top:13px;width:1px;height:104px;background:#e6e6e6;"></div>
<div class="abs" style="left:658px;top:13px;width:1px;height:104px;background:#e6e6e6;"></div>
<div class="abs" style="left:699px;top:13px;width:1px;height:104px;background:#e6e6e6;"></div>
<div class="abs" style="left:772px;top:13px;width:1px;height:104px;background:#e6e6e6;"></div>
<div class="abs" style="left:843px;top:13px;width:1px;height:104px;background:#e6e6e6;"></div>
<div class="abs" style="left:924px;top:13px;width:1px;height:104px;background:#e6e6e6;"></div>
<div class="abs" style="left:989px;top:13px;width:1px;height:104px;background:#e6e6e6;"></div>
<div class="abs" style="left:1060px;top:13px;width:1px;height:104px;background:#e6e6e6;"></div>
<div class="abs" style="left:132px;top:43.0px;width:55px;text-align:center;font-size:10.2px;line-height:13px;font-weight:bold;color:#3a3a3a">Clerical</div>
<svg class="abs" style="left:153.5px;top:94px" width="12" height="15" viewBox="0 0 12 15"><path d="M0.9 6L6 0.8 11.1 6z M0.9 7.9L6 13 11.1 7.9z" fill="#cdcdcd"/></svg>
<div class="abs" style="left:187px;top:30.0px;width:73px;text-align:center;font-size:10.2px;line-height:13px;font-weight:bold;color:#3a3a3a">Executive<br>&amp;<br>Managerial</div>
<svg class="abs" style="left:217.5px;top:94px" width="12" height="15" viewBox="0 0 12 15"><path d="M0.9 6L6 0.8 11.1 6z M0.9 7.9L6 13 11.1 7.9z" fill="#cdcdcd"/></svg>
<div class="abs" style="left:260px;top:36.5px;width:52px;text-align:center;font-size:10.2px;line-height:13px;font-weight:bold;color:#3a3a3a">Home<br>Duties</div>
<svg class="abs" style="left:280.0px;top:94px" width="12" height="15" viewBox="0 0 12 15"><path d="M0.9 6L6 0.8 11.1 6z M0.9 7.9L6 13 11.1 7.9z" fill="#cdcdcd"/></svg>
<div class="abs" style="left:312px;top:17.0px;width:81px;text-align:center;font-size:10.2px;line-height:13px;font-weight:bold;color:#3a3a3a">Independent<br>Means;<br>Retired;<br>Pensioner;<br>Unemployed</div>
<svg class="abs" style="left:346.5px;top:94px" width="12" height="15" viewBox="0 0 12 15"><path d="M0.9 6L6 0.8 11.1 6z M0.9 7.9L6 13 11.1 7.9z" fill="#cdcdcd"/></svg>
<div class="abs" style="left:393px;top:36.5px;width:72px;text-align:center;font-size:10.2px;line-height:13px;font-weight:bold;color:#3a3a3a">Primary<br>production</div>
<svg class="abs" style="left:423.0px;top:94px" width="12" height="15" viewBox="0 0 12 15"><path d="M0.9 6L6 0.8 11.1 6z M0.9 7.9L6 13 11.1 7.9z" fill="#cdcdcd"/></svg>
<div class="abs" style="left:465px;top:43.0px;width:79px;text-align:center;font-size:10.2px;line-height:13px;font-weight:bold;color:#3a3a3a">Professional</div>
<svg class="abs" style="left:498.5px;top:94px" width="12" height="15" viewBox="0 0 12 15"><path d="M0.9 6L6 0.8 11.1 6z M0.9 7.9L6 13 11.1 7.9z" fill="#cdcdcd"/></svg>
<div class="abs" style="left:544px;top:43.0px;width:47px;text-align:center;font-size:10.2px;line-height:13px;font-weight:bold;color:#3a3a3a">Sales</div>
<svg class="abs" style="left:561.5px;top:94px" width="12" height="15" viewBox="0 0 12 15"><path d="M0.9 6L6 0.8 11.1 6z M0.9 7.9L6 13 11.1 7.9z" fill="#cdcdcd"/></svg>
<div class="abs" style="left:591px;top:36.5px;width:67px;text-align:center;font-size:10.2px;line-height:13px;font-weight:bold;color:#3a3a3a">Self<br>employed</div>
<svg class="abs" style="left:618.5px;top:94px" width="12" height="15" viewBox="0 0 12 15"><path d="M0.9 6L6 0.8 11.1 6z M0.9 7.9L6 13 11.1 7.9z" fill="#cdcdcd"/></svg>
<div class="abs" style="left:658px;top:43.0px;width:41px;text-align:center;font-size:10.2px;line-height:13px;font-weight:bold;color:#3a3a3a">Staff</div>
<svg class="abs" style="left:672.5px;top:94px" width="12" height="15" viewBox="0 0 12 15"><path d="M0.9 6L6 0.8 11.1 6z M0.9 7.9L6 13 11.1 7.9z" fill="#cdcdcd"/></svg>
<div class="abs" style="left:699px;top:43.0px;width:73px;text-align:center;font-size:10.2px;line-height:13px;font-weight:bold;color:#3a3a3a">Tradesmen</div>
<svg class="abs" style="left:729.5px;top:94px" width="12" height="15" viewBox="0 0 12 15"><path d="M0.9 6L6 0.8 11.1 6z M0.9 7.9L6 13 11.1 7.9z" fill="#cdcdcd"/></svg>
<div class="abs" style="left:772px;top:30.0px;width:71px;text-align:center;font-size:10.2px;line-height:13px;font-weight:bold;color:#3a3a3a">Transport<br>&amp;<br>Recreation</div>
<svg class="abs" style="left:801.5px;top:94px" width="12" height="15" viewBox="0 0 12 15"><path d="M0.9 6L6 0.8 11.1 6z M0.9 7.9L6 13 11.1 7.9z" fill="#cdcdcd"/></svg>
<div class="abs" style="left:843px;top:43.0px;width:81px;text-align:center;font-size:10.2px;line-height:13px;font-weight:bold;color:#3a3a3a">Unemployed</div>
<svg class="abs" style="left:877.5px;top:94px" width="12" height="15" viewBox="0 0 12 15"><path d="M0.9 6L6 0.8 11.1 6z M0.9 7.9L6 13 11.1 7.9z" fill="#cdcdcd"/></svg>
<div class="abs" style="left:924px;top:43.0px;width:65px;text-align:center;font-size:10.2px;line-height:13px;font-weight:bold;color:#3a3a3a">Unknown</div>
<svg class="abs" style="left:950.5px;top:94px" width="12" height="15" viewBox="0 0 12 15"><path d="M0.9 6L6 0.8 11.1 6z M0.9 7.9L6 13 11.1 7.9z" fill="#cdcdcd"/></svg>
<div class="abs" style="left:989px;top:36.5px;width:71px;text-align:center;font-size:10.2px;line-height:13px;font-weight:bold;color:#3a3a3a">Not<br>Applicable</div>
<svg class="abs" style="left:1018.5px;top:94px" width="12" height="15" viewBox="0 0 12 15"><path d="M0.9 6L6 0.8 11.1 6z M0.9 7.9L6 13 11.1 7.9z" fill="#cdcdcd"/></svg>
<div class="abs" style="left:1060px;top:43.0px;width:66px;text-align:center;font-size:10.2px;line-height:13px;font-weight:bold;color:#3a3a3a"></div>
<svg class="abs" style="left:1087.0px;top:94px" width="12" height="15" viewBox="0 0 12 15"><path d="M0.9 6L6 0.8 11.1 6z M0.9 7.9L6 13 11.1 7.9z" fill="#cdcdcd"/></svg>
<div class="t" style="left:44px;top:45px;font-size:10.3px;font-weight:bold;color:#333">Occupation</div>
<svg style="position:absolute;left:106px;top:44px" width="12" height="12" viewBox="0 0 12 12"><circle cx="6" cy="6" r="6" fill="#9fbde2"/><rect x="5" y="2" width="2" height="2" fill="#1c3a66"/><path d="M4.2 5h2.8v4.6h1v0.9h-3.6v-0.9h1v-3.7h-1.2z" fill="#1c3a66"/></svg>
<div class="abs" style="left:124px;top:44.0px;width:2.6px;height:2.6px;border-radius:50%;background:#666"></div>
<div class="abs" style="left:124px;top:48.5px;width:2.6px;height:2.6px;border-radius:50%;background:#666"></div>
<div class="abs" style="left:124px;top:53.0px;width:2.6px;height:2.6px;border-radius:50%;background:#666"></div>
<div class="t" style="left:19px;top:97px;font-size:10.3px;font-weight:bold;color:#333"><u>&lt;&lt;</u> State Suburbs</div>
<svg class="abs" style="left:105px;top:94px" width="12" height="15" viewBox="0 0 12 15"><path d="M0.9 6L6 0.8 11.1 6z M0.9 7.9L6 13 11.1 7.9z" fill="#cdcdcd"/></svg>
<div class="abs" style="left:124px;top:96.0px;width:2.6px;height:2.6px;border-radius:50%;background:#666"></div>
<div class="abs" style="left:124px;top:100.5px;width:2.6px;height:2.6px;border-radius:50%;background:#666"></div>
<div class="abs" style="left:124px;top:105.0px;width:2.6px;height:2.6px;border-radius:50%;background:#666"></div>
<div class="abs" style="left:12px;top:117px;width:1100px;height:26px;background:#fafafa;border-bottom:1px solid #ececec"></div>
<div class="abs" style="left:19px;top:123px;font-size:10.4px;line-height:13px;font-weight:bold;color:#333;text-decoration:underline">Inner Sydney</div>
<div class="t" style="left:132px;top:124px;width:45px;text-align:right;font-size:10.7px;color:#333">42</div>
<div class="t" style="left:187px;top:124px;width:63px;text-align:right;font-size:10.7px;color:#333">0</div>
<div class="t" style="left:260px;top:124px;width:42px;text-align:right;font-size:10.7px;color:#333">175</div>
<div class="t" style="left:312px;top:124px;width:71px;text-align:right;font-size:10.7px;color:#333">196</div>
<div class="t" style="left:393px;top:124px;width:62px;text-align:right;font-size:10.7px;color:#333">21</div>
<div class="t" style="left:465px;top:124px;width:69px;text-align:right;font-size:10.7px;color:#333">35</div>
<div class="t" style="left:544px;top:124px;width:37px;text-align:right;font-size:10.7px;color:#333">28</div>
<div class="t" style="left:591px;top:124px;width:57px;text-align:right;font-size:10.7px;color:#333">21</div>
<div class="t" style="left:658px;top:124px;width:31px;text-align:right;font-size:10.7px;color:#333">0</div>
<div class="t" style="left:699px;top:124px;width:63px;text-align:right;font-size:10.7px;color:#333">112</div>
<div class="t" style="left:772px;top:124px;width:61px;text-align:right;font-size:10.7px;color:#333">35</div>
<div class="t" style="left:843px;top:124px;width:71px;text-align:right;font-size:10.7px;color:#333">518</div>
<div class="t" style="left:924px;top:124px;width:55px;text-align:right;font-size:10.7px;color:#333">546</div>
<div class="t" style="left:989px;top:124px;width:61px;text-align:right;font-size:10.7px;color:#333">196</div>
<div class="abs" style="left:12px;top:143px;width:1100px;height:26px;background:#ffffff;border-bottom:1px solid #ececec"></div>
<div class="abs" style="left:19px;top:149px;font-size:10.4px;line-height:13px;font-weight:bold;color:#333;text-decoration:underline">Eastern Suburbs</div>
<div class="t" style="left:132px;top:150px;width:45px;text-align:right;font-size:10.7px;color:#333">21</div>
<div class="t" style="left:187px;top:150px;width:63px;text-align:right;font-size:10.7px;color:#333">0</div>
<div class="t" style="left:260px;top:150px;width:42px;text-align:right;font-size:10.7px;color:#333">77</div>
<div class="t" style="left:312px;top:150px;width:71px;text-align:right;font-size:10.7px;color:#333">84</div>
<div class="t" style="left:393px;top:150px;width:62px;text-align:right;font-size:10.7px;color:#333">14</div>
<div class="t" style="left:465px;top:150px;width:69px;text-align:right;font-size:10.7px;color:#333">28</div>
<div class="t" style="left:544px;top:150px;width:37px;text-align:right;font-size:10.7px;color:#333">0</div>
<div class="t" style="left:591px;top:150px;width:57px;text-align:right;font-size:10.7px;color:#333">7</div>
<div class="t" style="left:658px;top:150px;width:31px;text-align:right;font-size:10.7px;color:#333">0</div>
<div class="t" style="left:699px;top:150px;width:63px;text-align:right;font-size:10.7px;color:#333">91</div>
<div class="t" style="left:772px;top:150px;width:61px;text-align:right;font-size:10.7px;color:#333">28</div>
<div class="t" style="left:843px;top:150px;width:71px;text-align:right;font-size:10.7px;color:#333">245</div>
<div class="t" style="left:924px;top:150px;width:55px;text-align:right;font-size:10.7px;color:#333">266</div>
<div class="t" style="left:989px;top:150px;width:61px;text-align:right;font-size:10.7px;color:#333">217</div>
<div class="abs" style="left:12px;top:169px;width:1100px;height:39px;background:#fafafa;border-bottom:1px solid #ececec"></div>
<div class="abs" style="left:19px;top:175px;font-size:10.4px;line-height:13px;font-weight:bold;color:#333;text-decoration:underline">St George-<br>Sutherland</div>
<div class="t" style="left:132px;top:176px;width:45px;text-align:right;font-size:10.7px;color:#333">28</div>
<div class="t" style="left:187px;top:176px;width:63px;text-align:right;font-size:10.7px;color:#333">7</div>
<div class="t" style="left:260px;top:176px;width:42px;text-align:right;font-size:10.7px;color:#333">133</div>
<div class="t" style="left:312px;top:176px;width:71px;text-align:right;font-size:10.7px;color:#333">49</div>
<div class="t" style="left:393px;top:176px;width:62px;text-align:right;font-size:10.7px;color:#333">21</div>
<div class="t" style="left:465px;top:176px;width:69px;text-align:right;font-size:10.7px;color:#333">28</div>
<div class="t" style="left:544px;top:176px;width:37px;text-align:right;font-size:10.7px;color:#333">21</div>
<div class="t" style="left:591px;top:176px;width:57px;text-align:right;font-size:10.7px;color:#333">84</div>
<div class="t" style="left:658px;top:176px;width:31px;text-align:right;font-size:10.7px;color:#333">0</div>
<div class="t" style="left:699px;top:176px;width:63px;text-align:right;font-size:10.7px;color:#333">154</div>
<div class="t" style="left:772px;top:176px;width:61px;text-align:right;font-size:10.7px;color:#333">28</div>
<div class="t" style="left:843px;top:176px;width:71px;text-align:right;font-size:10.7px;color:#333">420</div>
<div class="t" style="left:924px;top:176px;width:55px;text-align:right;font-size:10.7px;color:#333">301</div>
<div class="t" style="left:989px;top:176px;width:61px;text-align:right;font-size:10.7px;color:#333">196</div>
<div class="abs" style="left:12px;top:208px;width:1100px;height:39px;background:#ffffff;border-bottom:1px solid #ececec"></div>
<div class="abs" style="left:19px;top:214px;font-size:10.4px;line-height:13px;font-weight:bold;color:#333;text-decoration:underline">Canterbury-<br>Bankstown</div>
<div class="t" style="left:132px;top:215px;width:45px;text-align:right;font-size:10.7px;color:#333">56</div>
<div class="t" style="left:187px;top:215px;width:63px;text-align:right;font-size:10.7px;color:#333">49</div>
<div class="t" style="left:260px;top:215px;width:42px;text-align:right;font-size:10.7px;color:#333">287</div>
<div class="t" style="left:312px;top:215px;width:71px;text-align:right;font-size:10.7px;color:#333">196</div>
<div class="t" style="left:393px;top:215px;width:62px;text-align:right;font-size:10.7px;color:#333">14</div>
<div class="t" style="left:465px;top:215px;width:69px;text-align:right;font-size:10.7px;color:#333">70</div>
<div class="t" style="left:544px;top:215px;width:37px;text-align:right;font-size:10.7px;color:#333">42</div>
<div class="t" style="left:591px;top:215px;width:57px;text-align:right;font-size:10.7px;color:#333">105</div>
<div class="t" style="left:658px;top:215px;width:31px;text-align:right;font-size:10.7px;color:#333">0</div>
<div class="t" style="left:699px;top:215px;width:63px;text-align:right;font-size:10.7px;color:#333">252</div>
<div class="t" style="left:772px;top:215px;width:61px;text-align:right;font-size:10.7px;color:#333">49</div>
<div class="t" style="left:843px;top:215px;width:71px;text-align:right;font-size:10.7px;color:#333">791</div>
<div class="t" style="left:924px;top:215px;width:55px;text-align:right;font-size:10.7px;color:#333">791</div>
<div class="t" style="left:989px;top:215px;width:61px;text-align:right;font-size:10.7px;color:#333">371</div>
<div class="abs" style="left:12px;top:247px;width:1100px;height:26px;background:#fafafa;border-bottom:1px solid #ececec"></div>
<div class="abs" style="left:19px;top:253px;font-size:10.4px;line-height:13px;font-weight:bold;color:#333;text-decoration:underline">Fairfield-Liverpool</div>
<div class="t" style="left:132px;top:254px;width:45px;text-align:right;font-size:10.7px;color:#333">98</div>
<div class="t" style="left:187px;top:254px;width:63px;text-align:right;font-size:10.7px;color:#333">70</div>
<div class="t" style="left:260px;top:254px;width:42px;text-align:right;font-size:10.7px;color:#333">532</div>
<div class="t" style="left:312px;top:254px;width:71px;text-align:right;font-size:10.7px;color:#333">525</div>
<div class="t" style="left:393px;top:254px;width:62px;text-align:right;font-size:10.7px;color:#333">28</div>
<div class="t" style="left:465px;top:254px;width:69px;text-align:right;font-size:10.7px;color:#333">189</div>
<div class="t" style="left:544px;top:254px;width:37px;text-align:right;font-size:10.7px;color:#333">70</div>
<div class="t" style="left:591px;top:254px;width:57px;text-align:right;font-size:10.7px;color:#333">189</div>
<div class="t" style="left:658px;top:254px;width:31px;text-align:right;font-size:10.7px;color:#333">7</div>
<div class="t" style="left:699px;top:254px;width:63px;text-align:right;font-size:10.7px;color:#333">672</div>
<div class="t" style="left:772px;top:254px;width:61px;text-align:right;font-size:10.7px;color:#333">77</div>
<div class="t" style="left:843px;top:254px;width:71px;text-align:right;font-size:10.7px;color:#333">1,562</div>
<div class="t" style="left:924px;top:254px;width:55px;text-align:right;font-size:10.7px;color:#333">1,820</div>
<div class="t" style="left:989px;top:254px;width:61px;text-align:right;font-size:10.7px;color:#333">922</div>
<div class="abs" style="left:12px;top:273px;width:1100px;height:39px;background:#ffffff;border-bottom:1px solid #ececec"></div>
<div class="abs" style="left:19px;top:279px;font-size:10.4px;line-height:13px;font-weight:bold;color:#333;text-decoration:underline">Outer South Western<br>Sydney</div>
<div class="t" style="left:132px;top:280px;width:45px;text-align:right;font-size:10.7px;color:#333">49</div>
<div class="t" style="left:187px;top:280px;width:63px;text-align:right;font-size:10.7px;color:#333">14</div>
<div class="t" style="left:260px;top:280px;width:42px;text-align:right;font-size:10.7px;color:#333">196</div>
<div class="t" style="left:312px;top:280px;width:71px;text-align:right;font-size:10.7px;color:#333">238</div>
<div class="t" style="left:393px;top:280px;width:62px;text-align:right;font-size:10.7px;color:#333">28</div>
<div class="t" style="left:465px;top:280px;width:69px;text-align:right;font-size:10.7px;color:#333">84</div>
<div class="t" style="left:544px;top:280px;width:37px;text-align:right;font-size:10.7px;color:#333">70</div>
<div class="t" style="left:591px;top:280px;width:57px;text-align:right;font-size:10.7px;color:#333">56</div>
<div class="t" style="left:658px;top:280px;width:31px;text-align:right;font-size:10.7px;color:#333">7</div>
<div class="t" style="left:699px;top:280px;width:63px;text-align:right;font-size:10.7px;color:#333">196</div>
<div class="t" style="left:772px;top:280px;width:61px;text-align:right;font-size:10.7px;color:#333">56</div>
<div class="t" style="left:843px;top:280px;width:71px;text-align:right;font-size:10.7px;color:#333">686</div>
<div class="t" style="left:924px;top:280px;width:55px;text-align:right;font-size:10.7px;color:#333">755</div>
<div class="t" style="left:989px;top:280px;width:61px;text-align:right;font-size:10.7px;color:#333">350</div>
<div class="abs" style="left:12px;top:312px;width:1100px;height:39px;background:#fafafa;border-bottom:1px solid #ececec"></div>
<div class="abs" style="left:19px;top:318px;font-size:10.4px;line-height:13px;font-weight:bold;color:#333;text-decoration:underline">Inner Western<br>Sydney</div>
<div class="t" style="left:132px;top:319px;width:45px;text-align:right;font-size:10.7px;color:#333">56</div>
<div class="t" style="left:187px;top:319px;width:63px;text-align:right;font-size:10.7px;color:#333">14</div>
<div class="t" style="left:260px;top:319px;width:42px;text-align:right;font-size:10.7px;color:#333">217</div>
<div class="t" style="left:312px;top:319px;width:71px;text-align:right;font-size:10.7px;color:#333">119</div>
<div class="t" style="left:393px;top:319px;width:62px;text-align:right;font-size:10.7px;color:#333">28</div>
<div class="t" style="left:465px;top:319px;width:69px;text-align:right;font-size:10.7px;color:#333">35</div>
<div class="t" style="left:544px;top:319px;width:37px;text-align:right;font-size:10.7px;color:#333">35</div>
<div class="t" style="left:591px;top:319px;width:57px;text-align:right;font-size:10.7px;color:#333">63</div>
<div class="t" style="left:658px;top:319px;width:31px;text-align:right;font-size:10.7px;color:#333">0</div>
<div class="t" style="left:699px;top:319px;width:63px;text-align:right;font-size:10.7px;color:#333">182</div>
<div class="t" style="left:772px;top:319px;width:61px;text-align:right;font-size:10.7px;color:#333">42</div>
<div class="t" style="left:843px;top:319px;width:71px;text-align:right;font-size:10.7px;color:#333">441</div>
<div class="t" style="left:924px;top:319px;width:55px;text-align:right;font-size:10.7px;color:#333">427</div>
<div class="t" style="left:989px;top:319px;width:61px;text-align:right;font-size:10.7px;color:#333">231</div>
<div class="abs" style="left:12px;top:351px;width:1100px;height:26px;background:#ffffff;border-bottom:1px solid #ececec"></div>
<div class="abs" style="left:19px;top:357px;font-size:10.4px;line-height:13px;font-weight:bold;color:#333;text-decoration:underline">Central West</div>
<div class="t" style="left:132px;top:358px;width:45px;text-align:right;font-size:10.7px;color:#333">126</div>
<div class="t" style="left:187px;top:358px;width:63px;text-align:right;font-size:10.7px;color:#333">56</div>
<div class="t" style="left:260px;top:358px;width:42px;text-align:right;font-size:10.7px;color:#333">644</div>
<div class="t" style="left:312px;top:358px;width:71px;text-align:right;font-size:10.7px;color:#333">721</div>
<div class="t" style="left:393px;top:358px;width:62px;text-align:right;font-size:10.7px;color:#333">63</div>
<div class="t" style="left:465px;top:358px;width:69px;text-align:right;font-size:10.7px;color:#333">175</div>
<div class="t" style="left:544px;top:358px;width:37px;text-align:right;font-size:10.7px;color:#333">161</div>
<div class="t" style="left:591px;top:358px;width:57px;text-align:right;font-size:10.7px;color:#333">147</div>
<div class="t" style="left:658px;top:358px;width:31px;text-align:right;font-size:10.7px;color:#333">7</div>
<div class="t" style="left:699px;top:358px;width:63px;text-align:right;font-size:10.7px;color:#333">735</div>
<div class="t" style="left:772px;top:358px;width:61px;text-align:right;font-size:10.7px;color:#333">119</div>
<div class="t" style="left:843px;top:358px;width:71px;text-align:right;font-size:10.7px;color:#333">2,200</div>
<div class="t" style="left:924px;top:358px;width:55px;text-align:right;font-size:10.7px;color:#333">2,233</div>
<div class="t" style="left:989px;top:358px;width:61px;text-align:right;font-size:10.7px;color:#333">1,071</div>
<div class="abs" style="left:132px;top:117px;width:1px;height:300px;background:#e6e6e6;"></div>
<div class="abs" style="left:12px;top:117px;width:1px;height:300px;background:#e3e3e3;"></div>
</div>
<div class="abs" style="left:1456px;top:62px;width:17px;height:550px;background:#f1f1f1"></div>
<div class="abs" style="left:1458px;top:79px;width:13px;height:45px;background:#c1c1c1"></div>
<svg class="abs" style="left:1460px;top:68px" width="9" height="6" viewBox="0 0 9 6"><path d="M0 5.5L4.5 0 9 5.5z" fill="#a3a3a3"/></svg>
<svg class="abs" style="left:1460px;top:600px" width="9" height="6" viewBox="0 0 9 6"><path d="M0 0L4.5 5.5 9 0z" fill="#505050"/></svg>
<div class="abs" style="left:384px;top:612px;width:1072px;height:17px;background:#f1f1f1;border-bottom:1px solid #f6f4ee"></div>
<div class="abs" style="left:401px;top:614px;width:986px;height:13px;background:#c1c1c1"></div>
<svg class="abs" style="left:389px;top:616px" width="6" height="9" viewBox="0 0 6 9"><path d="M5 0.8L0.5 4.5 5 8.2z" fill="#a3a3a3"/></svg>
<svg class="abs" style="left:1446px;top:616px" width="6" height="9" viewBox="0 0 6 9"><path d="M0 0.8L4.5 4.5 0 8.2z" fill="#505050"/></svg>
<div class="abs" style="left:1456px;top:612px;width:17px;height:17px;background:#dcdcdc;border-bottom:1px solid #f6f4ee"></div>
<div class="abs" style="left:0;top:629px;width:1473px;height:24px;background:#4879be"></div>
<div class="t" style="left:1111px;top:637px;font-size:9px;color:#e6edf7">Feedback</div>
<div class="t" style="left:1169px;top:637px;font-size:9px;color:#e6edf7">Enquiry</div>
<div class="t" style="left:1216px;top:637px;font-size:9px;color:#e6edf7">Need Help?</div>
<div class="t" style="left:1281px;top:637px;font-size:9px;color:#e6edf7">Training</div>
<div class="t" style="left:1300px;top:630px;width:141px;text-align:right;font-size:8.7px;line-height:11px;color:#e6edf7;white-space:normal">Powered by SuperSTAR<br>WingArc Australia</div>
<svg class="abs" style="left:1446px;top:630px" width="24" height="22" viewBox="0 0 24 22"><path d="M4.6 4.2L9.6 3 9.4 17.6 4.2 18.8z" fill="#c8302e"/><path d="M6.5 8.5L8.4 6.6 8.1 16.3 6.2 16.6z" fill="#f4f8ff"/><text x="10" y="15.6" font-family="Liberation Sans" font-size="9" font-style="italic" font-weight="bold" fill="#15203a">ST</text></svg>
</body></html>
